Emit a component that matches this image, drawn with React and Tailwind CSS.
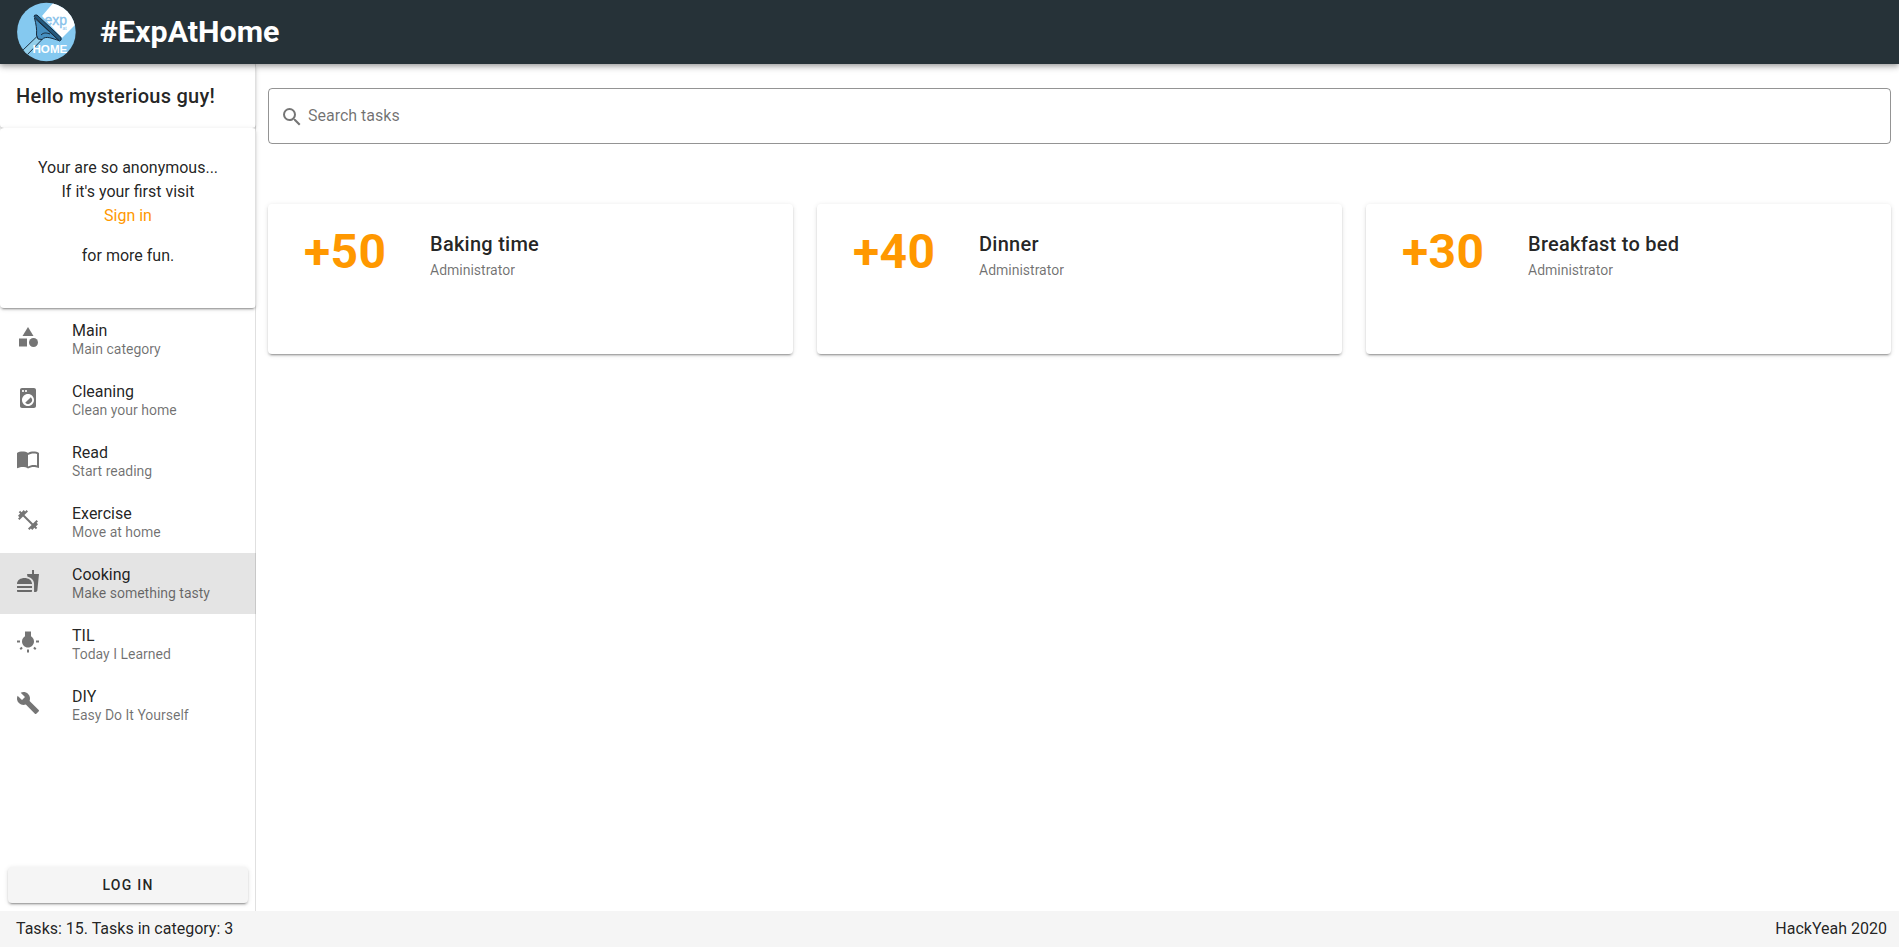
import {
  MdCategory,
  MdLocalLaundryService,
  MdImportContacts,
  MdFitnessCenter,
  MdFastfood,
  MdWbIncandescent,
  MdBuild,
  MdSearch,
} from "react-icons/md";

const categories = [
  { name: "Main", note: "Main category", Icon: MdCategory },
  { name: "Cleaning", note: "Clean your home", Icon: MdLocalLaundryService },
  { name: "Read", note: "Start reading", Icon: MdImportContacts },
  { name: "Exercise", note: "Move at home", Icon: MdFitnessCenter },
  { name: "Cooking", note: "Make something tasty", Icon: MdFastfood, active: true },
  { name: "TIL", note: "Today I Learned", Icon: MdWbIncandescent },
  { name: "DIY", note: "Easy Do It Yourself", Icon: MdBuild },
];

const tasks = [
  { points: "+50", title: "Baking time", author: "Administrator" },
  { points: "+40", title: "Dinner", author: "Administrator" },
  { points: "+30", title: "Breakfast to bed", author: "Administrator" },
];

const cardShadow =
  "shadow-[0_3px_1px_-2px_rgba(0,0,0,0.2),0_2px_2px_0_rgba(0,0,0,0.14),0_1px_5px_0_rgba(0,0,0,0.12)]";

function Logo() {
  return (
    <svg viewBox="0 0 60 60" className="size-[60px]">
      <defs>
        <clipPath id="disc">
          <circle cx="30.4" cy="30" r="29.3" />
        </clipPath>
      </defs>
      <g clipPath="url(#disc)">
        <rect width="60" height="60" fill="#85c9f0" />
        <path d="M26 14 L38 0 H60 V22 L46 36 Z" fill="#fff" />
        <text x="28.5" y="23" fontFamily="Liberation Sans, sans-serif" fontSize="14" fill="#86c1ea" stroke="#86c1ea" strokeWidth="0.3">exp</text>
        <text x="46.5" y="27.5" fontFamily="Liberation Sans, sans-serif" fontSize="5" fill="#86c1ea">at</text>
        <path d="M6.500 48.500 L21.500 34 L26 37.500 L10.500 53.500 Z" fill="#93cfea" stroke="#1d3346" strokeWidth="1" />
        <path d="M18.500 16 C20 22 21 27 20.500 33 L22 37 L26 37.500 C30 33 37 37 43 38.500 Z" fill="#468fc0" stroke="#17293b" strokeWidth="1" />
        <path d="M25 33 C28 30 31 31 34 32" fill="none" stroke="#17293b" strokeWidth="1" />
        <path d="M18 14.500 Q18 12.500 21 13 L45 35.500 Q46 38.500 43.500 39 Z" fill="#24587c" stroke="#17293b" strokeWidth="1" />
        <text x="16.500" y="50.500" fontFamily="Liberation Sans, sans-serif" fontSize="11.6" fontWeight="700" fill="#fff">HOME</text>
      </g>
    </svg>
  );
}

export default function App() {
  return (
    <div className="flex h-[947px] w-full flex-col overflow-hidden bg-white font-['Roboto',sans-serif] text-base text-black/87">
      <header className="relative z-10 flex h-16 shrink-0 items-center gap-6 bg-[#263238] pl-4 shadow-[0_2px_4px_-1px_rgba(0,0,0,0.2),0_4px_5px_0_rgba(0,0,0,0.14),0_1px_10px_0_rgba(0,0,0,0.12)]">
        <Logo />
        <h1 className="text-[30.4px] font-bold text-white">#ExpAtHome</h1>
      </header>

      <div className="flex min-h-0 flex-1">
        <aside className="relative flex w-64 shrink-0 flex-col after:absolute after:inset-y-0 after:right-0 after:w-px after:bg-black/12">
          <section className={`h-16 shrink-0 rounded px-4 pt-4 ${cardShadow}`}>
            <h2 className="text-xl leading-8 font-medium tracking-[0.0125em]">Hello mysterious guy!</h2>
          </section>
          <section className={`relative h-[180px] shrink-0 rounded bg-white pt-7 text-center leading-6 ${cardShadow}`}>
            <p>Your are so anonymous...</p>
            <p>If it's your first visit</p>
            <p className="mb-4 text-[#ff9800]">Sign in</p>
            <p>for more fun.</p>
          </section>
          <nav className="flex flex-col pt-px">
            {categories.map(({ name, note, Icon, active }) => (
              <a
                key={name}
                className={`flex h-[61px] gap-8 px-4 ${active ? "bg-[#e4e4e4]" : ""}`}
              >
                <Icon className="mt-4 size-6 text-black/54" />
                <div className="pt-3">
                  <div className="text-base leading-[19px]">{name}</div>
                  <div className="text-sm leading-[19px] text-black/56">{note}</div>
                </div>
              </a>
            ))}
          </nav>
          <div className="mt-auto p-2">
            <button className={`h-9 w-full rounded bg-[#f5f5f5] text-sm font-medium tracking-[0.0892857143em] ${cardShadow}`}>
              LOG IN
            </button>
          </div>
        </aside>

        <main className="flex min-w-0 flex-1 flex-col gap-[60px] pt-6 pr-2 pl-3">
          <div className="flex h-14 items-center gap-1 rounded border border-black/42 px-[11px] text-black/56">
            <MdSearch className="mt-0.5 size-6 text-black/54" />
            <span>Search tasks</span>
          </div>
          <div className="grid grid-cols-3 gap-6">
            {tasks.map((task) => (
              <article key={task.title} className={`flex h-[150px] rounded bg-white pt-6 ${cardShadow}`}>
                <div className="w-[162px] pl-9 text-5xl font-bold tracking-[0.4px] text-[#ff9800]">{task.points}</div>
                <div>
                  <h3 className="text-xl leading-8 font-medium tracking-[0.0125em]">{task.title}</h3>
                  <p className="text-sm leading-5 text-black/56">{task.author}</p>
                </div>
              </article>
            ))}
          </div>
        </main>
      </div>

      <footer className="flex h-9 shrink-0 items-center justify-between bg-[#f5f5f5] pr-3 pl-4">
        <span>Tasks: 15. Tasks in category: 3</span>
        <span>HackYeah 2020</span>
      </footer>
    </div>
  );
}
